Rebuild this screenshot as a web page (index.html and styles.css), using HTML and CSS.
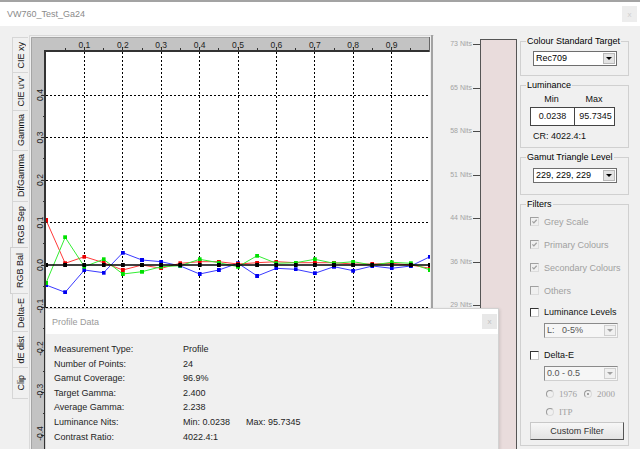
FILE: index.html
```html
<!DOCTYPE html>
<html>
<head>
<meta charset="utf-8">
<title>VW760_Test_Ga24</title>
<link rel="stylesheet" href="styles.css">
</head>
<body>
<div class="window">
  <header class="titlebar">
    <span class="title">VW760_Test_Ga24</span>
    <span class="close">x</span>
  </header>
  <div class="main">
    <nav class="tabs">
      <div class="tab"><span>CIE xy</span></div>
      <div class="tab"><span>CIE u'v'</span></div>
      <div class="tab"><span>Gamma</span></div>
      <div class="tab"><span>DifGamma</span></div>
      <div class="tab"><span>RGB Sep</span></div>
      <div class="tab active"><span>RGB Bal</span></div>
      <div class="tab"><span>Delta-E</span></div>
      <div class="tab"><span>dE dist</span></div>
      <div class="tab"><span>Clip</span></div>
    </nav>
    <div class="chart">
      <svg class="plot" width="406" height="423" viewBox="28 26 406 423">
        <defs>
          <clipPath id="clip"><rect x="46" y="52" width="384" height="397"/></clipPath>
          <marker id="mR" viewBox="0 0 4 4" refX="2" refY="2" markerWidth="4" markerHeight="4" markerUnits="userSpaceOnUse"><rect width="4" height="4" fill="#e80000"/></marker>
          <marker id="mG" viewBox="0 0 4 4" refX="2" refY="2" markerWidth="4" markerHeight="4" markerUnits="userSpaceOnUse"><rect width="4" height="4" fill="#00e000"/></marker>
          <marker id="mB" viewBox="0 0 4 4" refX="2" refY="2" markerWidth="4" markerHeight="4" markerUnits="userSpaceOnUse"><rect width="4" height="4" fill="#0000f0"/></marker>
          <marker id="mK" viewBox="0 0 4 4" refX="2" refY="2" markerWidth="4" markerHeight="4" markerUnits="userSpaceOnUse"><rect width="4" height="4" fill="#000"/></marker>
        </defs>
        <path d="M29.5 449V35.5H434" fill="none" stroke="#d9d9d9"/>
        <rect x="31" y="37" width="399" height="15" fill="#c3c3c3"/>
        <rect x="31" y="37" width="15" height="412" fill="#c3c3c3"/>
        <path d="M31.5 449V37.5H430" fill="none" stroke="#a5a5a5"/>
        <rect x="46" y="52" width="384" height="397" fill="#fff"/>
        <g clip-path="url(#clip)">
          <path class="grid" d="M84.5 52V449M122.5 52V449M161.5 52V449M199.5 52V449M238.5 52V449M276.5 52V449M314.5 52V449M353.5 52V449M391.5 52V449M46 95.5H430M46 137.5H430M46 180.5H430M46 222.5H430M46 307.5H430M46 350.5H430M46 392.5H430M46 435.5H430"/>
          <polyline class="s-blue" points="46,285 65.2,292.3 84.4,270 103.6,272.7 122.8,252.7 142,260 161.2,261.7 180.4,266 199.6,274 218.8,270 238,263.3 257.2,276 276.4,268.3 295.6,269.3 314.8,273.3 334,266.7 353.2,270.7 372.4,266 391.6,268.3 410.8,266 430,256.7" marker-start="url(#mB)" marker-mid="url(#mB)" marker-end="url(#mB)"/>
          <polyline class="s-red" points="46,220 65.2,263.3 84.4,256.7 103.6,262.7 122.8,270 142,265 161.2,268.3 180.4,263.3 199.6,261.7 218.8,261.7 238,264 257.2,262.7 276.4,261.7 295.6,262.7 314.8,262.7 334,262.7 353.2,264 372.4,264 391.6,263.3 410.8,265 430,268.3" marker-start="url(#mR)" marker-mid="url(#mR)" marker-end="url(#mR)"/>
          <polyline class="s-green" points="46,283 65.2,237.3 84.4,266.7 103.6,259.3 122.8,274 142,271.7 161.2,266.7 180.4,265.7 199.6,259.3 218.8,262.7 238,266.7 257.2,255.7 276.4,263.3 295.6,262.7 314.8,259.3 334,263.3 353.2,261.7 372.4,265 391.6,262.3 410.8,263.3 430,270" marker-start="url(#mG)" marker-mid="url(#mG)" marker-end="url(#mG)"/>
          <polyline class="s-black" points="46,265 65.2,265 84.4,265 103.6,265 122.8,265 142,265 161.2,265 180.4,265 199.6,265 218.8,265 238,265 257.2,265 276.4,265 295.6,265 314.8,265 334,265 353.2,265 372.4,265 391.6,265 410.8,265 430,265" marker-start="url(#mK)" marker-mid="url(#mK)" marker-end="url(#mK)"/>
        </g>
        <path d="M45 51H430" stroke="#333" stroke-width="2"/>
        <path d="M45 50V449" stroke="#333" stroke-width="2"/>
        <path d="M429.5 37V52" stroke="#666"/>
        <path d="M432 35V449" stroke="#a3a3a3" stroke-width="2"/>
        <path class="ticks" d="M84.5 46.5V50M122.5 46.5V50M161.5 46.5V50M199.5 46.5V50M238.5 46.5V50M276.5 46.5V50M314.5 46.5V50M353.5 46.5V50M391.5 46.5V50M65.5 48V50M103.5 48V50M142.5 48V50M180.5 48V50M218.5 48V50M257.5 48V50M295.5 48V50M334.5 48V50M372.5 48V50M410.5 48V50M41 95.5H44M41 137.5H44M41 180.5H44M41 222.5H44M41 265.5H44M41 307.5H44M41 350.5H44M41 392.5H44M41 435.5H44M42.5 116.5H44M42.5 158.5H44M42.5 201.5H44M42.5 243.5H44M42.5 286.5H44M42.5 328.5H44M42.5 371.5H44M42.5 413.5H44"/>
        <g class="axis-label">
          <text x="84.4" y="47.5">0.1</text>
          <text x="122.8" y="47.5">0.2</text>
          <text x="161.2" y="47.5">0.3</text>
          <text x="199.6" y="47.5">0.4</text>
          <text x="238" y="47.5">0.5</text>
          <text x="276.4" y="47.5">0.6</text>
          <text x="314.8" y="47.5">0.7</text>
          <text x="353.2" y="47.5">0.8</text>
          <text x="391.6" y="47.5">0.9</text>
          <text transform="translate(42.5 95) rotate(-90)">0.4</text>
          <text transform="translate(42.5 137.5) rotate(-90)">0.3</text>
          <text transform="translate(42.5 180) rotate(-90)">0.2</text>
          <text transform="translate(42.5 222.5) rotate(-90)">0.1</text>
          <text transform="translate(42.5 265) rotate(-90)">0.0</text>
          <text transform="translate(42.5 306) rotate(-90)">-0.1</text>
          <text transform="translate(42.5 348.5) rotate(-90)">-0.2</text>
          <text transform="translate(42.5 391) rotate(-90)">-0.3</text>
          <text transform="translate(42.5 433.5) rotate(-90)">-0.4</text>
        </g>
      </svg>
    </div>
    <div class="nits">
      <div class="scale">
        <div class="tick">73 Nits</div>
        <div class="tick">65 Nits</div>
        <div class="tick">58 Nits</div>
        <div class="tick">51 Nits</div>
        <div class="tick">44 Nits</div>
        <div class="tick">36 Nits</div>
        <div class="tick">29 Nits</div>
        <div class="tick">22 Nits</div>
        <div class="tick">14 Nits</div>
      </div>
      <div class="bar"></div>
    </div>
    <aside class="side">
      <fieldset class="group">
        <legend>Colour Standard Target</legend>
        <div class="select g1"><span class="val">Rec709</span><span class="arrow"></span></div>
      </fieldset>
      <fieldset class="group">
        <legend>Luminance</legend>
        <div class="minmax"><span>Min</span><span>Max</span></div>
        <div class="lumbox"><span>0.0238</span><span>95.7345</span></div>
        <div class="cr">CR: 4022.4:1</div>
      </fieldset>
      <fieldset class="group">
        <legend>Gamut Triangle Level</legend>
        <div class="select g3"><span class="val">229, 229, 229</span><span class="arrow"></span></div>
      </fieldset>
      <fieldset class="group filters">
        <legend>Filters</legend>
        <div class="check disabled"><span class="cb"><svg viewBox="0 0 9 9"><path d="M1.8 4.3l1.9 2L7.3 2.3"/></svg></span><span>Grey Scale</span></div>
        <div class="check disabled"><span class="cb"><svg viewBox="0 0 9 9"><path d="M1.8 4.3l1.9 2L7.3 2.3"/></svg></span><span>Primary Colours</span></div>
        <div class="check disabled"><span class="cb"><svg viewBox="0 0 9 9"><path d="M1.8 4.3l1.9 2L7.3 2.3"/></svg></span><span>Secondary Colours</span></div>
        <div class="check disabled"><span class="cb"></span><span>Others</span></div>
        <div class="check tight"><span class="cb"></span><span>Luminance Levels</span></div>
        <div class="select off"><span class="val">L:&nbsp;&nbsp;&nbsp;0-5%</span><span class="arrow"></span></div>
        <div class="check tight gapped"><span class="cb"></span><span>Delta-E</span></div>
        <div class="select off"><span class="val">0.0 - 0.5</span><span class="arrow"></span></div>
        <div class="radios first"><span class="radio"></span><span class="rl">1976</span><span class="radio on"></span><span class="rl">2000</span></div>
        <div class="radios"><span class="radio"></span><span class="rl">ITP</span></div>
        <div class="btn">Custom Filter</div>
      </fieldset>
    </aside>
  </div>
  <section class="popup">
    <div class="popup-head"><span class="popup-title">Profile Data</span><span class="popup-close">x</span></div>
    <div class="stats">
      <span>Measurement Type:</span><span class="wide">Profile</span>
      <span>Number of Points:</span><span class="wide">24</span>
      <span>Gamut Coverage:</span><span class="wide">96.9%</span>
      <span>Target Gamma:</span><span class="wide">2.400</span>
      <span>Average Gamma:</span><span class="wide">2.238</span>
      <span>Luminance Nits:</span><span>Min: 0.0238</span><span>Max: 95.7345</span>
      <span>Contrast Ratio:</span><span class="wide">4022.4:1</span>
    </div>
  </section>
</div>
</body>
</html>
```
FILE: styles.css
```css
* { box-sizing: border-box; }
html, body { margin: 0; padding: 0; }
body {
  width: 640px;
  height: 449px;
  overflow: hidden;
  background: #f0f0f0;
  font-family: "Liberation Sans", Arial, sans-serif;
  font-size: 9px;
  color: #111;
}
.window { position: relative; width: 640px; height: 449px; overflow: hidden; }

.titlebar {
  height: 26px;
  border-top: 2px solid #a3a3a3;
  background: #fff;
  display: flex;
  align-items: center;
  justify-content: space-between;
  padding: 0 3px 0 7px;
}
.title { color: #8a8a8a; font-size: 9px; }
.close {
  width: 15px; height: 16px;
  background: #ededed; color: #cfcfcf;
  font-size: 8px;
  display: flex; align-items: center; justify-content: center;
}

.main { display: flex; height: 423px; }

.tabs {
  width: 28px; flex: none;
  padding-top: 11px;
  display: flex; flex-direction: column; align-items: flex-end;
}
.tab {
  width: 16px; min-height: 32px;
  padding: 3.5px 0;
  margin-top: -1px;
  border: 1px solid #d6d6d6; border-right: none;
  display: flex; align-items: center; justify-content: center;
}
.tab:first-child { margin-top: 0; }
.tab span {
  writing-mode: vertical-rl;
  transform: rotate(180deg);
  white-space: nowrap;
  line-height: 10px;
  color: #111;
}
.tab.active { width: 18px; padding: 5px 0; border-color: #cfcfcf; }

.chart { width: 406px; flex: none; }
.plot { display: block; }
.grid { stroke: #000; stroke-width: 1; stroke-dasharray: 2 2; fill: none; shape-rendering: crispEdges; }
.ticks { stroke: #333; stroke-width: 1; fill: none; shape-rendering: crispEdges; }
.s-red { fill: none; stroke: #ff3a3a; stroke-width: 1; }
.s-green { fill: none; stroke: #33ee33; stroke-width: 1; }
.s-blue { fill: none; stroke: #3a3aff; stroke-width: 1; }
.s-black { fill: none; stroke: #000; stroke-width: 1.5; }
.axis-label text {
  font-family: "Liberation Sans", Arial, sans-serif;
  font-size: 8.5px;
  fill: #222;
  text-anchor: middle;
}

.nits { width: 84px; flex: none; display: flex; }
.scale { width: 46px; padding-top: 13px; display: flex; flex-direction: column; }
.tick {
  height: 43.5px; flex: none;
  display: flex; justify-content: flex-end; align-items: flex-start;
  font-size: 7px; line-height: 10px; color: #a3a3a3; white-space: nowrap;
}
.tick::after { content: ""; width: 7px; height: 1px; background: #4a4a4a; margin: 5px 0 0 1px; }
.bar {
  width: 37px; margin-top: 13px;
  background: #e9dcdc;
  border: 1px solid #555; border-bottom: 0;
}

.side {
  flex: 1;
  padding: 10px 0 0 2px;
  display: flex; flex-direction: column; gap: 4px;
}
.group {
  margin: 0; padding: 0 0 0 5px;
  width: 109px; min-width: 0;
  border: 1px solid #d0d0d0;
}
.group legend { padding: 0 1px; line-height: 11px; color: #000; }

.select {
  display: flex; align-items: center;
  height: 15px;
  border: 1px solid #6e6e6e;
  background: #fff;
  padding-left: 2px;
  color: #000;
}
.select .val { flex: 1; white-space: nowrap; line-height: 13px; }
.arrow {
  width: 12px; height: 11px; margin-right: 1px;
  background: #e3e3e3; border: 1px solid #b8b8b8;
  display: flex; align-items: center; justify-content: center;
}
.arrow::before {
  content: "";
  border-left: 3px solid transparent; border-right: 3px solid transparent;
  border-top: 3px solid #000;
}
.g1 { width: 84px; margin: 4px 0 9px 7px; }
.g3 { width: 84px; margin: 5px 0 11px 7px; }
.select.off {
  width: 74px; margin: 1px 0 0 18px;
  border-color: #8a8a8a #d0d0d0 #d0d0d0 #8a8a8a;
  background: #f6f6f6; color: #555;
}
.select.off .arrow { background: #f0f0f0; border-color: #cfcfcf; }
.select.off .arrow::before { border-top-color: #a0a0a0; }

.minmax, .lumbox { display: grid; grid-template-columns: 43px 42px; text-align: center; }
.minmax { margin: 3px 0 0 4px; line-height: 10px; }
.lumbox {
  margin: 3px 0 0 4px; width: 85px; height: 19px;
  border: 1px solid #444; background: #fff; line-height: 17px;
}
.lumbox span + span { border-left: 1px solid #444; }
.cr { margin: 5px 0 6px 7px; line-height: 10px; }

.check { display: flex; align-items: center; gap: 5px; height: 23px; margin-left: 4px; }
.check.tight { height: 20px; }
.check.gapped { margin-top: 7px; }
.cb {
  width: 9px; height: 9px; flex: none;
  border: 1px solid; border-color: #333 #c8c8c8 #c8c8c8 #333;
  background: #fff;
  display: flex;
}
.cb svg { width: 7px; height: 7px; }
.cb path { fill: none; stroke: #a0a0a0; stroke-width: 1.6; }
.check.disabled { color: #a0a0a0; }
.check.disabled .cb { border-color: #a0a0a0 #dcdcdc #dcdcdc #a0a0a0; background: #f0f0f0; }

.radios { display: flex; align-items: center; height: 18px; margin-left: 20px; }
.radios.first { margin-top: 3px; height: 19px; }
.radio {
  width: 8px; height: 8px; flex: none; border-radius: 50%;
  border: 1px solid; border-color: #9a9a9a #dadada #dadada #9a9a9a;
  background: #f0f0f0;
  display: flex; align-items: center; justify-content: center;
}
.radio.on::before { content: ""; width: 2px; height: 2px; border-radius: 50%; background: #888; }
.rl { font-family: "Liberation Serif", "Times New Roman", serif; font-size: 9px; color: #a0a0a0; margin: 0 7px 0 5px; }

.btn {
  margin: 1px 0 5px 4px;
  width: 94px; height: 18px;
  border: 1px solid; border-color: #c8c8c8 #555 #555 #c8c8c8;
  background: linear-gradient(#f7f7f7, #e3e3e3);
  color: #333; text-align: center; line-height: 16px;
}

.popup {
  position: absolute; left: 45px; top: 308px;
  width: 454px; height: 160px;
  background: #f0f0f0;
  border: 1px solid #d2d2d2;
  box-shadow: 1px 1px 3px rgba(0, 0, 0, 0.12);
}
.popup-head {
  height: 25px; background: #fff;
  display: flex; align-items: center; justify-content: space-between;
  padding: 0 1px 0 6px;
}
.popup-title { color: #9a9a9a; }
.popup-close {
  width: 15px; height: 15px;
  background: #e8e8e8; color: #c0c0c0; font-size: 8px;
  display: flex; align-items: center; justify-content: center;
}
.stats {
  display: grid; grid-template-columns: 129px 63px auto;
  padding: 8px 0 0 8px;
  line-height: 14.6px;
  color: #1e1e1e;
}
.stats .wide { grid-column: span 2; }
```
